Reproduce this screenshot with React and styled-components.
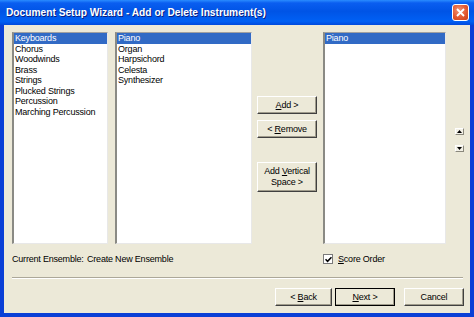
import React from "react";
import styled, { createGlobalStyle } from "styled-components";

const GlobalStyle = createGlobalStyle`
  html, body {
    margin: 0;
    padding: 0;
    background: #ffffff;
  }
  body {
    font-family: "Liberation Sans", Arial, sans-serif;
  }
`;

const Window = styled.div`
  width: 474px;
  height: 317px;
  display: flex;
  flex-direction: column;
  background: #0a3fd6;
  box-sizing: border-box;
  overflow: hidden;
`;

const TitleBar = styled.div`
  height: 25px;
  flex: none;
  display: flex;
  align-items: center;
  justify-content: space-between;
  padding: 0 5px 0 6px;
  background: linear-gradient(
    to bottom,
    #2a8cff 0%,
    #0a5ef0 12%,
    #0054e6 45%,
    #0060f4 85%,
    #0049dc 100%
  );
  color: #fff;
  font-weight: bold;
  font-size: 10.2px;
  text-shadow: 1px 1px 0 #0a1e80;
`;

const CloseButton = styled.div`
  width: 15px;
  height: 15px;
  border: 1px solid #fff;
  border-radius: 3px;
  background: radial-gradient(circle at 40% 35%, #f29577 0%, #e3582f 55%, #c73d18 100%);
  display: flex;
  align-items: center;
  justify-content: center;
`;

const Client = styled.div`
  flex: 1;
  margin: 0 4px 4px 4px;
  background: #ece9d8;
  display: flex;
  flex-direction: column;
  padding: 7px 0 0 8px;
  font-size: 9px;
  letter-spacing: -0.2px;
  color: #000;
`;

const MainRow = styled.div`
  display: flex;
  height: 212px;
`;

const ListBox = styled.div`
  width: ${(p) => p.$width}px;
  margin-right: ${(p) => p.$gap || 0}px;
  background: #fff;
  box-sizing: border-box;
  border-top: 1px solid #a0a0a0;
  border-left: 2px solid #8a8a84;
  border-right: 1px solid #e8e8e8;
  border-bottom: 1px solid #e8e8e8;
  display: flex;
  flex-direction: column;
`;

const ListItem = styled.div`
  height: 10.5px;
  line-height: 10.5px;
  padding-left: 1px;
  white-space: nowrap;
  background: ${(p) => (p.$selected ? "#316ac5" : "transparent")};
  color: ${(p) => (p.$selected ? "#fff" : "#000")};
`;

const MiddleColumn = styled.div`
  width: 71px;
  display: flex;
  flex-direction: column;
  align-items: flex-start;
  padding: 64px 0 0 5px;
  box-sizing: border-box;
`;

const Button = styled.div`
  width: ${(p) => p.$width || 60}px;
  height: ${(p) => p.$height || 18}px;
  box-sizing: border-box;
  margin-bottom: ${(p) => p.$after || 0}px;
  background: #ece9d8;
  border-top: 1px solid #ffffff;
  border-left: 1px solid #ffffff;
  border-right: 1px solid #404040;
  border-bottom: 1px solid #404040;
  box-shadow: inset -1px -1px 0 #a09c8c;
  outline: ${(p) => (p.$default ? "1px solid #000" : "none")};
  outline-offset: -1px;
  display: flex;
  align-items: center;
  justify-content: center;
  text-align: center;
  line-height: 11px;
  font-size: 9px;
  color: #000;
`;

const ArrowColumn = styled.div`
  width: 24px;
  display: flex;
  flex-direction: column;
  padding: 96px 0 0 9px;
  box-sizing: border-box;
  gap: 10px;
`;

const ArrowButton = styled.div`
  width: 9px;
  height: 7px;
  box-sizing: border-box;
  background: #f2f0e6;
  border-top: 1px solid #fff;
  border-left: 1px solid #fff;
  border-right: 1px solid #8a887c;
  border-bottom: 1px solid #8a887c;
  display: flex;
  align-items: center;
  justify-content: center;
`;

const StatusRow = styled.div`
  display: grid;
  grid-template-columns: 75px 236px 1fr;
  align-items: center;
  height: 30px;
`;

const Label = styled.span`
  white-space: nowrap;
`;

const CheckRow = styled.div`
  display: flex;
  align-items: center;
  gap: 5px;
`;

const CheckBox = styled.div`
  width: 8px;
  height: 8px;
  background: #fff;
  border: 1px solid #7a7a7a;
  display: flex;
  align-items: center;
  justify-content: center;
`;

const Separator = styled.div`
  height: 0;
  margin: 3px 7px 0 0;
  border-top: 1px solid #aca899;
  border-bottom: 1px solid #fff;
`;

const Footer = styled.div`
  display: flex;
  justify-content: flex-end;
  padding: 9px 6px 0 0;
  gap: 3px;
`;

const Spacer = styled.div`
  width: 3px;
`;

const keyboardsGroups = [
  "Keyboards",
  "Chorus",
  "Woodwinds",
  "Brass",
  "Strings",
  "Plucked Strings",
  "Percussion",
  "Marching Percussion",
];

const instruments = ["Piano", "Organ", "Harpsichord", "Celesta", "Synthesizer"];

const Arrow = ({ up }) => (
  <svg width="5" height="3" viewBox="0 0 5 3">
    <path d={up ? "M2.5 0 L5 3 L0 3 Z" : "M0 0 L5 0 L2.5 3 Z"} fill="#000" />
  </svg>
);

export default function App() {
  return (
    <>
      <GlobalStyle />
      <Window>
        <TitleBar>
          <span>Document Setup Wizard - Add or Delete Instrument(s)</span>
          <CloseButton>
            <svg width="9" height="9" viewBox="0 0 9 9">
              <path d="M1 1 L8 8 M8 1 L1 8" stroke="#fff" strokeWidth="1.8" />
            </svg>
          </CloseButton>
        </TitleBar>
        <Client>
          <MainRow>
            <ListBox $width={96} $gap={7}>
              {keyboardsGroups.map((g, i) => (
                <ListItem key={g} $selected={i === 0}>
                  {g}
                </ListItem>
              ))}
            </ListBox>
            <ListBox $width={137}>
              {instruments.map((g, i) => (
                <ListItem key={g} $selected={i === 0}>
                  {g}
                </ListItem>
              ))}
            </ListBox>
            <MiddleColumn>
              <Button $after={6}>
                <span>
                  <u>A</u>dd &gt;
                </span>
              </Button>
              <Button $after={24}>
                <span>
                  &lt; <u>R</u>emove
                </span>
              </Button>
              <Button $height={30}>
                <span>
                  Add <u>V</u>ertical
                  <br />
                  Space &gt;
                </span>
              </Button>
            </MiddleColumn>
            <ListBox $width={123}>
              <ListItem $selected>Piano</ListItem>
            </ListBox>
            <ArrowColumn>
              <ArrowButton>
                <Arrow up />
              </ArrowButton>
              <ArrowButton>
                <Arrow />
              </ArrowButton>
            </ArrowColumn>
          </MainRow>
          <StatusRow>
            <Label>Current Ensemble:</Label>
            <Label>Create New Ensemble</Label>
            <CheckRow>
              <CheckBox>
                <svg width="7" height="7" viewBox="0 0 7 7">
                  <path d="M0.5 3.2 L2.6 5.3 L6.5 1.2" stroke="#000" strokeWidth="1.6" fill="none" />
                </svg>
              </CheckBox>
              <span>
                <u>S</u>core Order
              </span>
            </CheckRow>
          </StatusRow>
          <Separator />
          <Footer>
            <Button $width={57}>
              <span>
                &lt; <u>B</u>ack
              </span>
            </Button>
            <Button $width={60} $default>
              <span>
                <u>N</u>ext &gt;
              </span>
            </Button>
            <Spacer />
            <Button $width={60}>Cancel</Button>
          </Footer>
        </Client>
      </Window>
    </>
  );
}
